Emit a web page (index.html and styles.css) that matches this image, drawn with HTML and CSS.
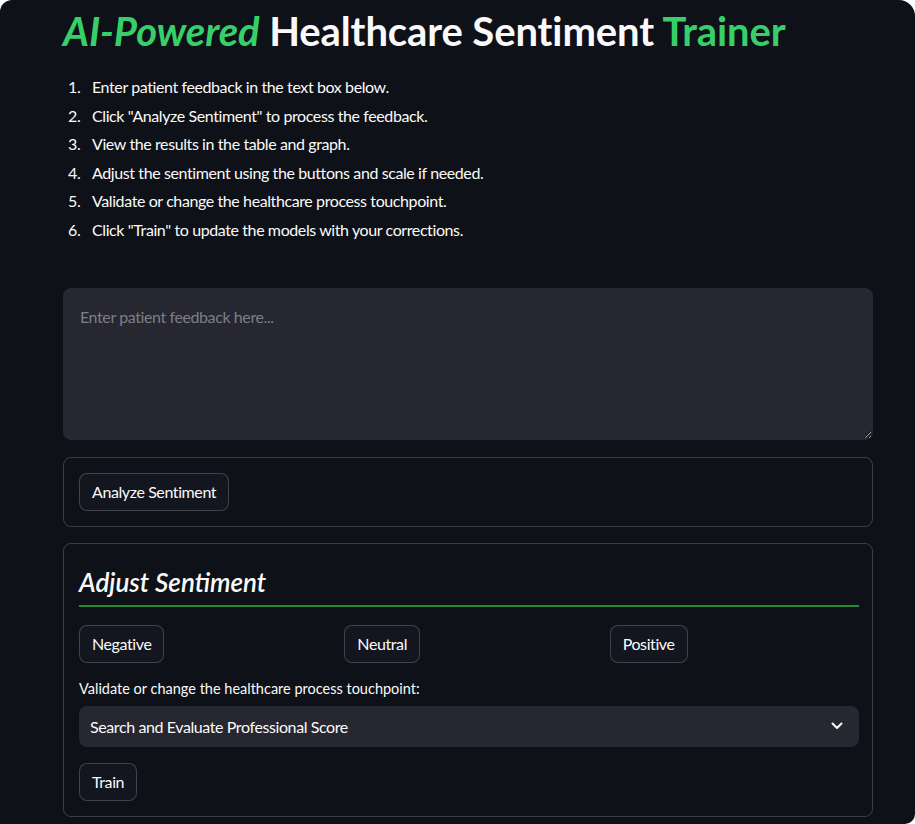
FILE: index.html
```html
<!DOCTYPE html>
<html>
<head>
<meta charset="utf-8">
<link rel="stylesheet" href="styles.css">
</head>
<body>
<div class="app">
  <main class="main">
    <h1 class="title"><em class="green">AI-Powered</em> Healthcare Sentiment <span class="green">Trainer</span></h1>
    <ol class="steps">
      <li>Enter patient feedback in the text box below.</li>
      <li>Click "Analyze Sentiment" to process the feedback.</li>
      <li>View the results in the table and graph.</li>
      <li>Adjust the sentiment using the buttons and scale if needed.</li>
      <li>Validate or change the healthcare process touchpoint.</li>
      <li>Click "Train" to update the models with your corrections.</li>
    </ol>
    <textarea class="feedback" placeholder="Enter patient feedback here..."></textarea>
    <section class="box">
      <button class="btn">Analyze Sentiment</button>
    </section>
    <section class="box adjust">
      <h2 class="subtitle">Adjust Sentiment</h2>
      <div class="cols">
        <div class="col"><button class="btn">Negative</button></div>
        <div class="col"><button class="btn">Neutral</button></div>
        <div class="col"><button class="btn">Positive</button></div>
      </div>
      <div class="field">
        <label class="label">Validate or change the healthcare process touchpoint:</label>
        <div class="select">
          <span>Search and Evaluate Professional Score</span>
          <svg class="chev" width="12" height="8" viewBox="0 0 12 8"><path d="M1.5 1.5 L6 6 L10.5 1.5" fill="none" stroke="#fafafa" stroke-width="2" stroke-linecap="round" stroke-linejoin="round"/></svg>
        </div>
      </div>
      <div><button class="btn">Train</button></div>
    </section>
  </main>
</div>
</body>
</html>
```

FILE: styles.css
```css
* { box-sizing: border-box; }
html, body { margin: 0; padding: 0; background: #ffffff; }
.app {
  width: 915px;
  height: 824px;
  background: #0e1117;
  border-radius: 12px 16px 10px 0;
  overflow: hidden;
  color: #fafafa;
  font-family: Lato, "Noto Sans", sans-serif;
}
.main {
  width: 810px;
  margin-left: 63px;
  padding-top: 7px;
}
.title {
  margin: 0;
  font-size: 40px;
  line-height: 48px;
  font-weight: 700;
  letter-spacing: -0.1px;
  color: #fafafa;
}
.green { color: #36cf6a; }
em.green { font-style: italic; }
.steps {
  list-style: none;
  counter-reset: step;
  margin: 19px 0 0 0;
  padding: 0 0 0 5px;
  font-size: 16px;
  letter-spacing: -0.4px;
}
.steps li {
  counter-increment: step;
  display: flex;
  line-height: 25.6px;
  margin-bottom: 3px;
}
.steps li::before {
  content: counter(step) ".";
  width: 24px;
  flex: none;
}
.feedback {
  display: block;
  width: 810px;
  height: 152px;
  margin-top: 45px;
  background: #262730;
  border: 1px solid #262730;
  border-radius: 8px;
  color: #fafafa;
  font-family: inherit;
  font-size: 16px;
  letter-spacing: -0.4px;
  line-height: 22px;
  padding: 17px 16px;
  resize: vertical;
  outline: none;
}
.feedback::placeholder { color: #7d7f87; }
.box {
  margin-top: 17px;
  border: 1px solid rgba(250, 250, 250, 0.2);
  border-radius: 8px;
  padding: 15px 13px 15px 15px;
}
.adjust {
  margin-top: 16px;
  display: flex;
  flex-direction: column;
  gap: 16px;
}
.btn {
  height: 38px;
  padding: 0 12px;
  background: #13161f;
  color: #fafafa;
  border: 1px solid rgba(250, 250, 250, 0.2);
  border-radius: 8px;
  font-family: inherit;
  font-size: 16px;
  letter-spacing: -0.4px;
}
.subtitle {
  margin: 0 0 2px 0;
  font-size: 26px;
  line-height: 46px;
  font-weight: 600;
  font-style: italic;
  border-bottom: 2px solid #228b34;
}
.cols {
  display: flex;
  gap: 16px;
}
.col { flex: 1 1 0; }
.field {
  display: flex;
  flex-direction: column;
}
.label {
  font-size: 14.5px;
  line-height: 20px;
  margin-bottom: 7px;
}
.select {
  height: 41px;
  background: #262730;
  border-radius: 8px;
  display: flex;
  align-items: center;
  justify-content: space-between;
  padding: 0 16px 0 11px;
  font-size: 16px;
  letter-spacing: -0.4px;
}
.chev { display: block; }
```
